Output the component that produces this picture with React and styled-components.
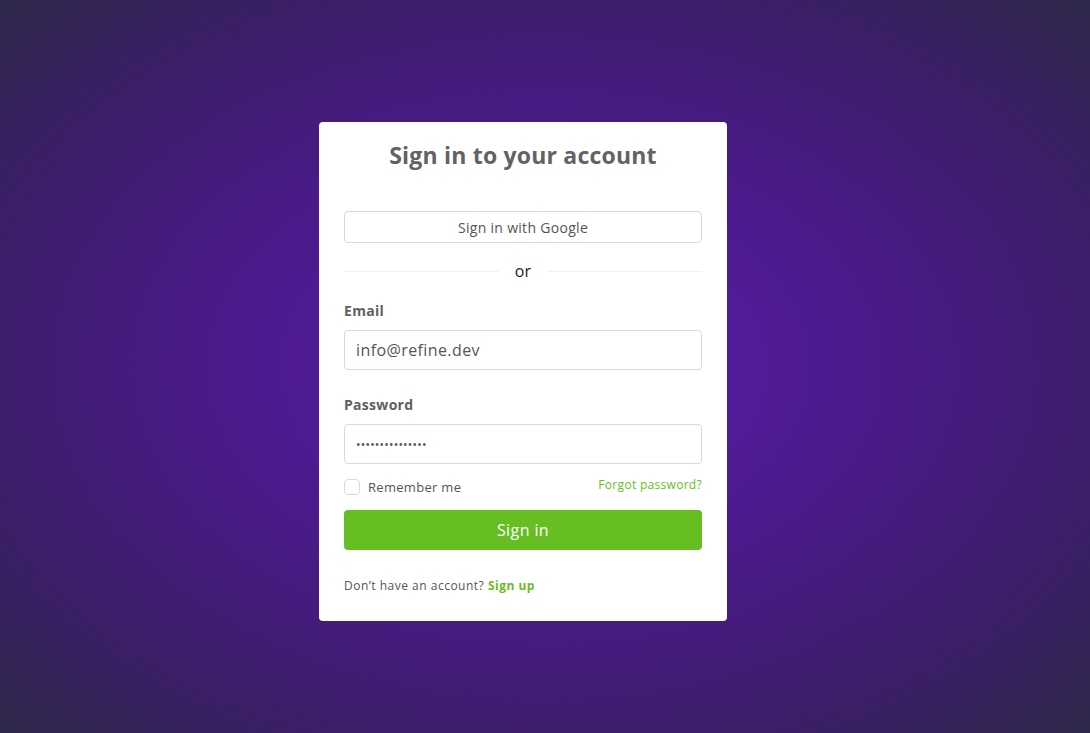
import React from 'react'
import styled, { createGlobalStyle } from 'styled-components'

const GlobalStyle = createGlobalStyle`
    html, body {
        margin: 0;
        padding: 0;
        height: 100%;
    }
    body {
        font-family: 'Open Sans', 'Liberation Sans', sans-serif;
    }
    * {
        box-sizing: border-box;
    }
`
//STYLE//
const Page = styled.main`
    width: 100%;
    min-height: 100vh;
    display: flex;
    justify-content: center;
    align-items: flex-start;
    padding: 122px 44px 0 0;
    background: radial-gradient(
        ellipse at 50% 50%,
        #5a1fb0 0%,
        #4b1a8c 40%,
        #3b1e68 75%,
        #2e2849 100%
    );
`
const Card = styled.section`
    width: 408px;
    background: #fff;
    border-radius: 4px;
    padding: 18px 25px 27px;
    display: flex;
    flex-direction: column;
    letter-spacing: 0.3px;
`
const Title = styled.h1`
    margin: 0 0 41px;
    text-align: center;
    font-size: 23px;
    font-weight: 700;
    color: #626262;
    letter-spacing: 0.2px;
    line-height: 30px;
`
const OutlineButton = styled.button`
    height: 32px;
    width: 100%;
    background: #fff;
    border: 1px solid #d9d9d9;
    border-radius: 4px;
    font-family: inherit;
    font-size: 14px;
    letter-spacing: 0.3px;
    color: #555;
    cursor: pointer;
`
const Divider = styled.div`
    display: flex;
    align-items: center;
    gap: 16px;
    margin: 17px 0 19px;
    font-size: 16px;
    color: #222;

    &::before,
    &::after {
        content: '';
        flex: 1;
        height: 1px;
        background: #f0f0f0;
    }
`
const Field = styled.div`
    display: flex;
    flex-direction: column;
    margin-bottom: ${(p) => p.mb || '25px'};
`
const Label = styled.label`
    font-size: 14px;
    font-weight: 700;
    color: #5f5f5f;
    margin-bottom: 9px;
    line-height: 20px;
`
const Input = styled.input`
    height: 40px;
    border: 1px solid #d9d9d9;
    border-radius: 4px;
    padding: 0 11px;
    font-family: inherit;
    font-size: ${(p) => (p.type === 'password' ? '12px' : '16px')};
    letter-spacing: ${(p) => (p.type === 'password' ? '0.2px' : '0.4px')};
    color: #555;
    outline: none;
`
const Row = styled.div`
    display: flex;
    justify-content: space-between;
    align-items: center;
    margin-bottom: 14px;
`
const CheckLabel = styled.label`
    display: flex;
    align-items: center;
    gap: 8px;
    font-size: 13px;
    color: #555;
    margin-top: 6px;
`
const Box = styled.span`
    width: 16px;
    height: 16px;
    border: 1px solid #d9d9d9;
    border-radius: 4px;
    background: #fff;
`
const GreenLink = styled.a`
    color: #67be23;
    font-size: ${(p) => p.size || '12px'};
    font-weight: ${(p) => (p.bold ? 700 : 400)};
    text-decoration: none;
    cursor: pointer;
`
const PrimaryButton = styled.button`
    height: 40px;
    width: 100%;
    border: none;
    border-radius: 4px;
    background: #67be23;
    color: #fff;
    font-family: inherit;
    font-size: 16px;
    letter-spacing: 0.4px;
    cursor: pointer;
    margin-bottom: 27px;
`
const Footer = styled.p`
    margin: 0;
    font-size: 12px;
    letter-spacing: 0.5px;
    color: #555;
`
//STYLE//
export default function App() {
    return (
        <>
            <GlobalStyle />
            <Page>
                <Card>
                    <Title>Sign in to your account</Title>
                    <OutlineButton>Sign in with Google</OutlineButton>
                    <Divider>or</Divider>
                    <Field>
                        <Label>Email</Label>
                        <Input type="text" defaultValue="info@refine.dev" />
                    </Field>
                    <Field mb="8px">
                        <Label>Password</Label>
                        <Input type="password" defaultValue="refine-supabase" />
                    </Field>
                    <Row>
                        <CheckLabel>
                            <Box />
                            Remember me
                        </CheckLabel>
                        <GreenLink>Forgot password?</GreenLink>
                    </Row>
                    <PrimaryButton>Sign in</PrimaryButton>
                    <Footer>
                        Don’t have an account?{' '}
                        <GreenLink bold>Sign up</GreenLink>
                    </Footer>
                </Card>
            </Page>
        </>
    )
}
